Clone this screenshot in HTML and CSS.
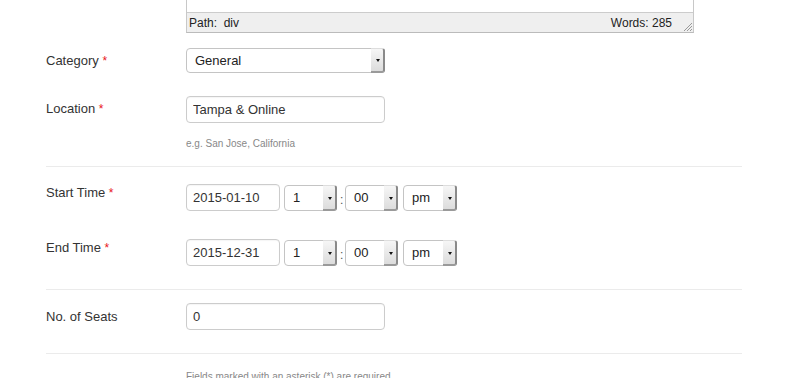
FILE: index.html
```
<!DOCTYPE html>
<html lang="en">

<head>
    <meta charset="UTF-8">
    <meta name="viewport" content="width=device-width, initial-scale=1.0">
    <title>Edit Event</title>
    <link rel="stylesheet" href="styles.css">
</head>

<body>
    <div id="app">
        <div class="row row-editor">
            <div></div>
            <div class="editor">
                <div class="editor-body"></div>
                <div class="editor-status">
                    <span>Path:&nbsp; div</span>
                    <span class="words">Words: 285</span>
                    <span class="grip">
                        <svg width="9" height="9" viewBox="0 0 9 9">
                            <path d="M1 9L9 1M4 9L9 4M7 9L9 7" stroke="#999" stroke-width="1" />
                        </svg>
                    </span>
                </div>
            </div>
        </div>

        <div class="row row-category">
            <label>Category <em>*</em></label>
            <div class="select w-wide"><select><option>General</option></select></div>
        </div>

        <div class="row row-location">
            <label>Location <em>*</em></label>
            <div>
                <input type="text" class="w-wide" value="Tampa &amp; Online" />
                <p class="hint">e.g. San Jose, California</p>
            </div>
        </div>

        <div class="sep"></div>

        <div class="row row-time row-start">
            <label class="top">Start Time <em>*</em></label>
            <div class="time">
                <input type="text" class="w-date" value="2015-01-10" />
                <div class="select w-small"><select><option>1</option></select></div>
                <span class="colon">:</span>
                <div class="select w-small"><select><option>00</option></select></div>
                <div class="select w-ampm"><select><option>pm</option></select></div>
            </div>
        </div>

        <div class="row row-time row-end">
            <label class="top">End Time <em>*</em></label>
            <div class="time">
                <input type="text" class="w-date" value="2015-12-31" />
                <div class="select w-small"><select><option>1</option></select></div>
                <span class="colon">:</span>
                <div class="select w-small"><select><option>00</option></select></div>
                <div class="select w-ampm"><select><option>pm</option></select></div>
            </div>
        </div>

        <div class="sep sep-2"></div>

        <div class="row row-seats">
            <label>No. of Seats</label>
            <input type="text" class="w-wide" value="0" />
        </div>

        <div class="sep sep-3"></div>

        <div class="row row-foot">
            <div></div>
            <p class="hint foot">Fields marked with an asterisk (*) are required.</p>
        </div>
    </div>
</body>

</html>
```
FILE: styles.css
```
html * {
    padding: 0;
    margin: 0;
    border: 0;
    box-sizing: border-box;
}

body {
    font-family: "Liberation Sans", Arial, sans-serif;
    font-size: 13px;
    color: #333;
    background: #fff;
    overflow: hidden;
}

#app {
    width: 696px;
    margin-left: 46px;
}

.row {
    display: grid;
    grid-template-columns: 140px 1fr;
    align-items: center;
}

label {
    color: #333;
    font-size: 13px;
    line-height: 16px;
}

label em {
    font-style: normal;
    color: #e8141b;
    font-size: 12px;
}

label.top {
    align-self: start;
    padding-top: 1px;
}

/* editor */
.row-editor {
    margin-top: -50px;
}

.editor {
    width: 508px;
    border: 1px solid #c8c8c8;
    border-bottom-color: #bbb;
}

.editor-body {
    height: 61px;
    background: #fff;
}

.editor-status {
    display: flex;
    align-items: center;
    height: 20px;
    background: #efefef;
    border-top: 1px solid #ccc;
    padding-left: 2px;
    font-size: 12px;
    color: #222;
}

.editor-status .words {
    margin-left: auto;
    margin-right: 11px;
}

.grip {
    display: flex;
    align-self: flex-end;
    margin-right: 1px;
    margin-bottom: 1px;
}

/* controls */
input {
    height: 27px;
    border: 1px solid #ccc;
    border-radius: 4px;
    padding: 0 6px;
    font-family: "Liberation Sans", Arial, sans-serif;
    font-size: 13px;
    color: #333;
    box-shadow: inset 0 1px 1px rgba(0, 0, 0, .04);
    display: block;
}

.w-wide {
    width: 199px;
}

.w-date {
    width: 94px;
}

.select {
    position: relative;
    height: 25px;
}

.select select {
    -webkit-appearance: none;
    appearance: none;
    width: 100%;
    height: 100%;
    border: 1px solid #c4c4c4;
    border-radius: 4px;
    background: #fff;
    padding: 0 8px;
    font-family: "Liberation Sans", Arial, sans-serif;
    font-size: 13px;
    color: #222;
}

.select::before {
    content: "";
    position: absolute;
    right: 0;
    top: 0;
    bottom: 0;
    width: 12px;
    border-radius: 0 3px 3px 0;
    background: linear-gradient(#f6f6f6, #dcdcdc);
    border-right: 2px solid #8a8a8a;
    border-bottom: 2px solid #9a9a9a;
    border-top: 1px solid #ddd;
    pointer-events: none;
}

.select::after {
    content: "";
    position: absolute;
    right: 5px;
    top: 11px;
    border-left: 2px solid transparent;
    border-right: 2px solid transparent;
    border-top: 3px solid #111;
    pointer-events: none;
}

.hint {
    font-size: 10px;
    color: #888;
    margin-top: 14px;
    line-height: 14px;
}

.sep {
    border-top: 1px solid #ebebeb;
    margin-top: 15px;
}

/* rows */
.row-category {
    margin-top: 15px;
}

.row-location {
    margin-top: 23px;
    align-items: start;
}

.row-location label {
    margin-top: 5px;
}

.row-start {
    margin-top: 17px;
}

.row-end {
    margin-top: 28px;
}

.time {
    display: flex;
    align-items: center;
}

.time input {
    height: 27px;
}

.time .select {
    height: 26px;
}

.time .select::after {
    top: 12px;
}

.w-small {
    width: 53px;
    margin-left: 4px;
}

.w-ampm {
    width: 54px;
    margin-left: 5px;
}

.colon {
    width: 4px;
    margin-left: 3px;
    margin-top: 5px;
    font-size: 12px;
    color: #555;
}

.colon + .select {
    margin-left: 1px;
}

.sep-2 {
    margin-top: 23px;
}

.row-seats {
    margin-top: 13px;
}

.sep-3 {
    margin-top: 23px;
}

.foot {
    margin-top: 16px;
}
```
